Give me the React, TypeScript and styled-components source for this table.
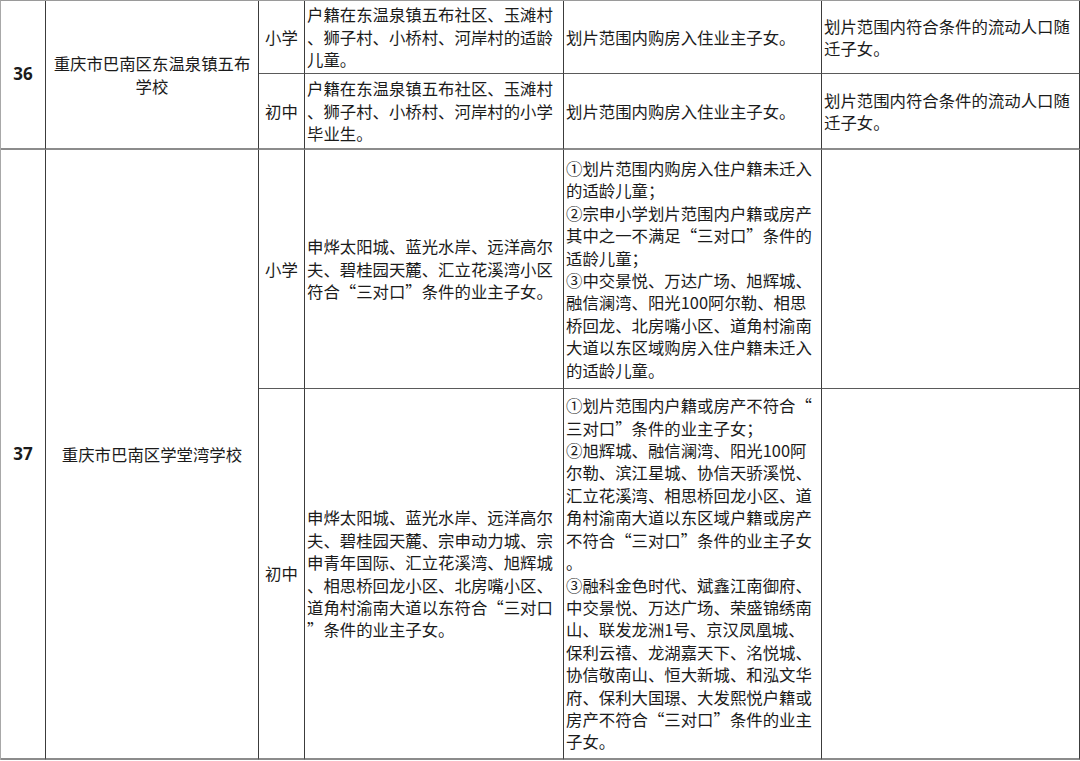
import React from 'react';
import styled, { createGlobalStyle } from 'styled-components';

const GlobalStyle = createGlobalStyle`
  html, body {
    margin: 0;
    padding: 0;
    background: #ffffff;
    overflow: hidden;
  }
  * {
    box-sizing: border-box;
  }
`;

const Sheet = styled.div`
  display: grid;
  grid-template-columns: 45px 213px 46px 259px 258px 258px;
  grid-template-rows: 73px 76px 239px 371px;
  width: 1080px;
  border-top: 1px solid #9a9a9a;
  border-left: 1px solid #a8a8a8;
  font-family: "Noto Sans CJK SC", "Noto Sans", sans-serif;
  font-size: 16.4px;
  line-height: 22.4px;
  color: #1b1b1b;
  background: #fff;
`;

type Divider = 'sub' | 'main';

const Cell = styled.div<{ $divider: Divider; $align?: 'left' | 'center' }>`
  display: flex;
  flex-direction: column;
  justify-content: center;
  align-items: ${(p) => (p.$align === 'center' ? 'center' : 'flex-start')};
  text-align: ${(p) => (p.$align === 'center' ? 'center' : 'left')};
  padding: 0 2px;
  border-right: 1px solid #3c3c3c;
  border-bottom: ${(p) => (p.$divider === 'main' ? '2px solid #8c8c8c' : '1px solid #5a5a5a')};
  overflow: hidden;
`;

const NumberCell = styled(Cell)`
  grid-row: span 2;
  font-family: "Open Sans", "Noto Sans", sans-serif;
  font-weight: 700;
  font-size: 17px;
`;

const SchoolCell = styled(Cell)`
  grid-row: span 2;
`;

const Line = styled.span`
  display: block;
  white-space: nowrap;
`;

interface Level {
  name: string;
  scope: string[];
  housing: string[];
  migrant: string[];
}

interface School {
  no: number;
  name: string[];
  levels: Level[];
}

const schools: School[] = [
  {
    no: 36,
    name: ['重庆市巴南区东温泉镇五布', '学校'],
    levels: [
      {
        name: '小学',
        scope: ['户籍在东温泉镇五布社区、玉滩村', '、狮子村、小桥村、河岸村的适龄', '儿童。'],
        housing: ['划片范围内购房入住业主子女。'],
        migrant: ['划片范围内符合条件的流动人口随', '迁子女。'],
      },
      {
        name: '初中',
        scope: ['户籍在东温泉镇五布社区、玉滩村', '、狮子村、小桥村、河岸村的小学', '毕业生。'],
        housing: ['划片范围内购房入住业主子女。'],
        migrant: ['划片范围内符合条件的流动人口随', '迁子女。'],
      },
    ],
  },
  {
    no: 37,
    name: ['重庆市巴南区学堂湾学校'],
    levels: [
      {
        name: '小学',
        scope: ['申烨太阳城、蓝光水岸、远洋高尔', '夫、碧桂园天麓、汇立花溪湾小区', '符合“三对口”条件的业主子女。'],
        housing: [
          '①划片范围内购房入住户籍未迁入',
          '的适龄儿童；',
          '②宗申小学划片范围内户籍或房产',
          '其中之一不满足“三对口”条件的',
          '适龄儿童；',
          '③中交景悦、万达广场、旭辉城、',
          '融信澜湾、阳光100阿尔勒、相思',
          '桥回龙、北房嘴小区、道角村渝南',
          '大道以东区域购房入住户籍未迁入',
          '的适龄儿童。',
        ],
        migrant: [],
      },
      {
        name: '初中',
        scope: [
          '申烨太阳城、蓝光水岸、远洋高尔',
          '夫、碧桂园天麓、宗申动力城、宗',
          '申青年国际、汇立花溪湾、旭辉城',
          '、相思桥回龙小区、北房嘴小区、',
          '道角村渝南大道以东符合“三对口',
          '”条件的业主子女。',
        ],
        housing: [
          '①划片范围内户籍或房产不符合“',
          '三对口”条件的业主子女；',
          '②旭辉城、融信澜湾、阳光100阿',
          '尔勒、滨江星城、协信天骄溪悦、',
          '汇立花溪湾、相思桥回龙小区、道',
          '角村渝南大道以东区域户籍或房产',
          '不符合“三对口”条件的业主子女',
          '。',
          '③融科金色时代、斌鑫江南御府、',
          '中交景悦、万达广场、荣盛锦绣南',
          '山、联发龙洲1号、京汉凤凰城、',
          '保利云禧、龙湖嘉天下、洺悦城、',
          '协信敬南山、恒大新城、和泓文华',
          '府、保利大国璟、大发熙悦户籍或',
          '房产不符合“三对口”条件的业主',
          '子女。',
        ],
        migrant: [],
      },
    ],
  },
];

const Lines: React.FC<{ lines: string[] }> = ({ lines }) => (
  <>
    {lines.map((l, i) => (
      <Line key={i}>{l}</Line>
    ))}
  </>
);

export default function App() {
  return (
    <>
      <GlobalStyle />
      <Sheet>
        {schools.map((s) =>
          s.levels.map((lv, i) => {
            const divider: Divider = i === s.levels.length - 1 ? 'main' : 'sub';
            return (
              <React.Fragment key={`${s.no}-${lv.name}`}>
                {i === 0 && (
                  <>
                    <NumberCell $divider="main" $align="center">{s.no}</NumberCell>
                    <SchoolCell $divider="main" $align="center">
                      <Lines lines={s.name} />
                    </SchoolCell>
                  </>
                )}
                <Cell $divider={divider} $align="center">{lv.name}</Cell>
                <Cell $divider={divider}>
                  <Lines lines={lv.scope} />
                </Cell>
                <Cell $divider={divider}>
                  <Lines lines={lv.housing} />
                </Cell>
                <Cell $divider={divider}>
                  <Lines lines={lv.migrant} />
                </Cell>
              </React.Fragment>
            );
          })
        )}
      </Sheet>
    </>
  );
}
